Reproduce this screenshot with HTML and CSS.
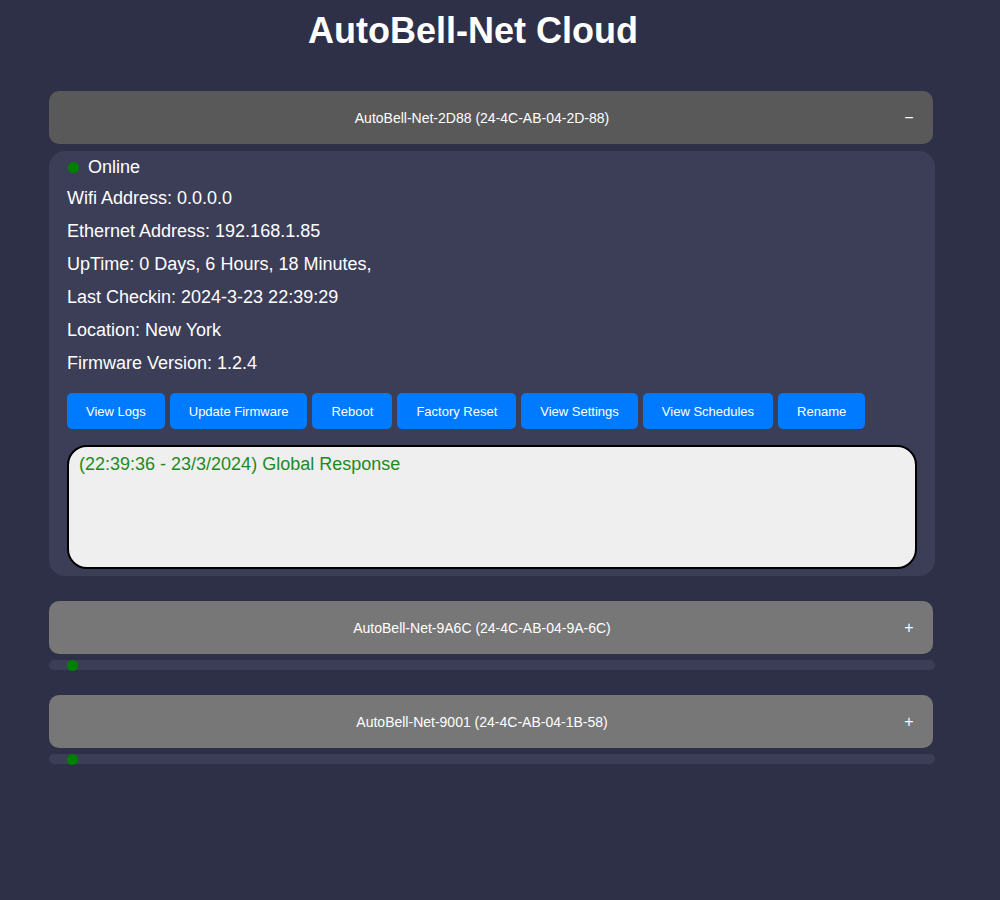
FILE: index.html
```html
<!DOCTYPE html>
<html lang="en">
  <head>
    <meta charset="UTF-8" />
    <meta name="viewport" content="width=device-width, initial-scale=1.0" />
    <title>AutoBell-Net Cloud</title>
    <link rel="stylesheet" href="styles.css">
  </head>
  <body>
    <h1>AutoBell-Net Cloud</h1>
    <div class="container">
      <div class="device">
        <div class="device-header active">
          <span class="device-name">AutoBell-Net-2D88 (24-4C-AB-04-2D-88)</span>
          <span class="toggle">&minus;</span>
        </div>
        <div class="device-panel">
          <div class="status"><span class="dot"></span>Online</div>
          <div class="info">Wifi Address: 0.0.0.0</div>
          <div class="info">Ethernet Address: 192.168.1.85</div>
          <div class="info">UpTime: 0 Days, 6 Hours, 18 Minutes,</div>
          <div class="info">Last Checkin: 2024-3-23 22:39:29</div>
          <div class="info">Location: New York</div>
          <div class="info">Firmware Version: 1.2.4</div>
          <div class="actions">
            <button class="button">View Logs</button>
            <button class="button">Update Firmware</button>
            <button class="button">Reboot</button>
            <button class="button">Factory Reset</button>
            <button class="button">View Settings</button>
            <button class="button">View Schedules</button>
            <button class="button">Rename</button>
          </div>
          <div class="log">(22:39:36 - 23/3/2024) Global Response</div>
        </div>
      </div>
      <div class="device">
        <div class="device-header">
          <span class="device-name">AutoBell-Net-9A6C (24-4C-AB-04-9A-6C)</span>
          <span class="toggle">+</span>
        </div>
        <div class="device-panel collapsed">
          <div class="status"><span class="dot"></span></div>
        </div>
      </div>
      <div class="device">
        <div class="device-header">
          <span class="device-name">AutoBell-Net-9001 (24-4C-AB-04-1B-58)</span>
          <span class="toggle">+</span>
        </div>
        <div class="device-panel collapsed">
          <div class="status"><span class="dot"></span></div>
        </div>
      </div>
    </div>
  </body>
</html>
```

FILE: styles.css
```css
body {
  font-family: "Liberation Sans", Arial, sans-serif;
  background-color: #2e3048;
  color: #fff;
  margin: 0;
  padding: 0;
}
h1 {
  text-align: center;
  font-size: 36px;
  line-height: 41px;
  margin: 10px 0 40px;
  padding-right: 54px;
}
.container {
  margin: 0 65px 0 49px;
}
.device {
  margin-bottom: 25px;
}
.device-header {
  display: flex;
  align-items: center;
  height: 53px;
  padding: 0 15px 0 18px;
  background-color: #777;
  border-radius: 10px;
  font-size: 14px;
  box-sizing: border-box;
  margin-right: 2px;
}
.device-header.active {
  background-color: #595959;
}
.device-name {
  flex: 1;
  text-align: center;
  padding-right: 3px;
}
.toggle {
  width: 18px;
  text-align: center;
  font-size: 16px;
}
.device-panel {
  background-color: #3c3e58;
  border-radius: 16px;
  padding: 6px 18px 7px;
  margin-top: 7px;
  font-size: 18px;
}
.device-panel.collapsed {
  height: 10px;
  padding: 0 18px;
  margin-top: 6px;
  border-radius: 6px;
}
.status {
  display: flex;
  align-items: center;
  height: 21px;
  margin-bottom: 4px;
}
.collapsed .status {
  height: 10px;
  margin: 0;
}
.dot {
  width: 11px;
  height: 11px;
  border-radius: 50%;
  background-color: #008000;
  margin: 0 9px 0 1px;
  flex-shrink: 0;
}
.collapsed .dot {
  margin-left: 0;
}
.info {
  line-height: 33px;
}
.actions {
  display: flex;
  gap: 5px;
  margin-top: 13px;
}
.button {
  height: 36px;
  padding: 0 19px;
  border: none;
  border-radius: 5px;
  background-color: #007bff;
  color: #fff;
  font-family: "Liberation Sans", Arial, sans-serif;
  font-size: 13px;
  cursor: pointer;
}
.log {
  margin-top: 16px;
  background-color: #efefef;
  border: 2px solid #000;
  border-radius: 20px;
  padding: 6px 10px;
  height: 108px;
  color: #1e8a1e;
  font-size: 18px;
  line-height: 22px;
}
```
